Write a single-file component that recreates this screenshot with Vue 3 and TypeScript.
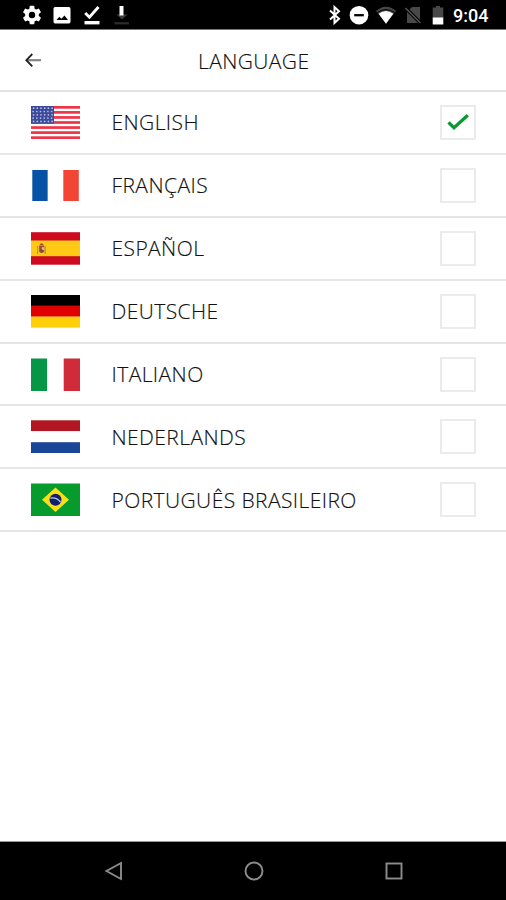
<script setup lang="ts">
import { ref } from 'vue'

interface Language {
  code: string
  label: string
}

const languages: Language[] = [
  { code: 'us', label: 'ENGLISH' },
  { code: 'fr', label: 'FRANÇAIS' },
  { code: 'es', label: 'ESPAÑOL' },
  { code: 'de', label: 'DEUTSCHE' },
  { code: 'it', label: 'ITALIANO' },
  { code: 'nl', label: 'NEDERLANDS' },
  { code: 'br', label: 'PORTUGUÊS BRASILEIRO' },
]

const selected = ref<string>('us')
</script>

<template>
  <div class="screen">
    <header class="status">
      <div class="notifications">
        <svg width="22" height="22" viewBox="0 0 24 24"><path fill="#fff" d="M19.43 12.98c.04-.32.07-.64.07-.98s-.03-.66-.07-.98l2.11-1.65c.19-.15.24-.42.12-.64l-2-3.46c-.12-.22-.39-.3-.61-.22l-2.49 1c-.52-.4-1.08-.73-1.69-.98l-.38-2.65A.49.49 0 0 0 14 2h-4c-.25 0-.46.18-.49.42l-.38 2.65c-.61.25-1.17.59-1.69.98l-2.49-1c-.23-.09-.49 0-.61.22l-2 3.46c-.13.22-.07.49.12.64l2.11 1.65c-.04.32-.07.65-.07.98s.03.66.07.98l-2.11 1.65c-.19.15-.24.42-.12.64l2 3.46c.12.22.39.3.61.22l2.49-1c.52.4 1.08.73 1.69.98l.38 2.65c.03.24.24.42.49.42h4c.25 0 .46-.18.49-.42l.38-2.65c.61-.25 1.17-.59 1.69-.98l2.49 1c.23.09.49 0 .61-.22l2-3.46c.12-.22.07-.49-.12-.64zM12 15.5a3.5 3.5 0 1 1 0-7 3.5 3.5 0 0 1 0 7z" /></svg>
        <svg width="22" height="22" viewBox="0 0 22 22"><rect x="2.5" y="3" width="17" height="16.500" rx="1.700" fill="#fff" /><path d="M5.500 16l2.800-3.200 2 1.900 3.200-3.200 3.500 4.500z" fill="#000" /></svg>
        <svg width="22" height="22" viewBox="0 0 22 22"><path d="M4.2 9l4.200 4.200L17.500 3" fill="none" stroke="#fff" stroke-width="2.900" /><path d="M3.500 18.700h15" stroke="#fff" stroke-width="3.400" /></svg>
        <svg width="22" height="22" viewBox="0 0 22 22"><path d="M5.500 10.500h11l-5.500 5z" fill="#3c3c3c" /><path d="M10.500 2v9.500" stroke="#fff" stroke-width="4" /><path d="M3.500 19.300h14.500" stroke="#2c2c2c" stroke-width="2.200" /></svg>
      </div>
      <div class="system">
        <svg width="14" height="22" viewBox="0 0 14 22"><path d="M2 6.500l9 8.300-4.500 4.200V3l4.500 4.200L2 15.500" fill="none" stroke="#fff" stroke-width="2" /></svg>
        <svg class="dnd" width="20" height="22" viewBox="0 0 20 22"><circle cx="10" cy="11.200" r="9.300" fill="#fff" /><path d="M5.200 11.200h9.600" stroke="#000" stroke-width="2.300" /></svg>
        <svg class="wifi" width="22" height="22" viewBox="0 0 22 22"><path d="M1 7Q11-1.500 21 7L11 19.500z" fill="#484848" /><path d="M2.300 8.500Q11 2.700 19.700 8.500" fill="none" stroke="#000" stroke-width="1" /><path d="M3.700 9.800Q11 4 18.300 9.800L11 19.800z" fill="#fff" /></svg>
        <svg class="sim" width="18" height="22" viewBox="0 0 18 22"><path d="M8 3h8v16H3V8z" fill="#484848" /><path d="M1 3.500l16 16" stroke="#000" stroke-width="3.500" /><path d="M1.500 4l15 15" stroke="#555" stroke-width="1.500" /></svg>
        <svg class="battery" width="12" height="22" viewBox="0 0 12 22"><path d="M4 2h4v1.500h3.300V14H.7V3.500H4z" fill="#484848" /><path d="M.7 13.500h10.600v7H.7z" fill="#fff" /></svg>
        <span class="clock">9:04</span>
      </div>
    </header>

    <div class="titlebar">
      <button class="back" aria-label="Back">
        <svg width="18" height="16" viewBox="0 0 18 16"><path d="M2 8.200h15" stroke="#858585" stroke-width="2.200" /><path d="M8.300 2L2.300 8.200l6 6.200" fill="none" stroke="#222" stroke-width="1.800" /></svg>
      </button>
      <h1>LANGUAGE</h1>
    </div>

    <main class="list">
      <div v-for="lang in languages" :key="lang.code" class="row" @click="selected = lang.code">
        <svg class="flag" viewBox="0 0 49 33" width="49" height="33">
          <g v-if="lang.code === 'us'">
            <rect width="49" height="33" fill="#fff" />
            <rect v-for="i in 7" :key="i" x="0" :y="(i - 1) * 5.05" width="49" height="2.7" fill="#ee3448" />
            <rect width="23" height="17.7" fill="#3c4a9c" />
            <template v-for="r in 5" :key="'r' + r">
              <circle v-for="c in 6" :key="c" :cx="c * 3.7 - 1.6 + (r % 2) * 0.5" :cy="r * 3.3 - 1.1" r="0.85" fill="#b9c0e0" />
            </template>
          </g>
          <g v-else-if="lang.code === 'fr'">
            <rect x="1.300" y="1" width="15.500" height="31" fill="#0553a4" />
            <rect x="16.800" y="1" width="15.500" height="31" fill="#fff" />
            <rect x="32.300" y="1" width="15.500" height="31" fill="#f24536" />
          </g>
          <g v-else-if="lang.code === 'es'">
            <rect y=".2" width="49" height="32.500" fill="#cd0a20" />
            <rect y="8.500" width="49" height="15.700" fill="#ffc916" />
            <path d="M8.200 13.500h5v6q-2.500 3-5 0z" fill="#a8442f" />
            <path d="M6.700 14v8M14.200 14v8" stroke="#a98361" stroke-width="1" />
            <path d="M8.500 13q2-3.500 4.300 0z" fill="#9b4430" />
            <path d="M10.700 15.200h2.500v3h-2.500z" fill="#d5b5a0" />
            <circle cx="10.800" cy="18.300" r="1" fill="#475078" />
          </g>
          <g v-else-if="lang.code === 'de'">
            <rect width="49" height="11" fill="#000" />
            <rect y="10.600" width="49" height="11.200" fill="#df0000" />
            <rect y="21.600" width="49" height="11" fill="#ffd00a" />
          </g>
          <g v-else-if="lang.code === 'it'">
            <rect y=".5" width="16.300" height="32.500" fill="#079546" />
            <rect x="16.300" y=".5" width="16.400" height="32.500" fill="#fff" />
            <rect x="32.700" y=".5" width="16.300" height="32.500" fill="#d02b3b" />
          </g>
          <g v-else-if="lang.code === 'nl'">
            <rect y=".3" width="49" height="11" fill="#b11722" />
            <rect y="11.300" width="49" height="11" fill="#fff" />
            <rect y="22.200" width="49" height="10.800" fill="#1b4697" />
          </g>
          <g v-else>
            <rect y=".5" width="49" height="32.500" fill="#069b2d" />
            <path d="M24.500 4.500L38 16.700 24.500 29 11 16.700z" fill="#f8df18" />
            <circle cx="24.500" cy="16.700" r="6" fill="#111f71" />
            <path d="M19.300 15.200q6-1.200 10.300 3.800" fill="none" stroke="#b7cbd4" stroke-width="1.200" />
          </g>
        </svg>
        <span class="label">{{ lang.label }}</span>
        <span class="box">
          <svg v-if="selected === lang.code" width="22" height="18" viewBox="0 0 22 18"><path d="M1.500 9.400l5.500 5.300L20.800 2.300" fill="none" stroke="#0c9835" stroke-width="3.300" /></svg>
        </span>
      </div>
    </main>

    <nav class="navbar">
      <svg width="20" height="20" viewBox="0 0 20 20"><path d="M17 2v16L2.500 10z" fill="none" stroke="#8c8c8c" stroke-width="1.900" /></svg>
      <svg width="20" height="20" viewBox="0 0 20 20"><circle cx="10" cy="10" r="8.500" fill="none" stroke="#8c8c8c" stroke-width="1.900" /></svg>
      <svg width="20" height="20" viewBox="0 0 20 20"><rect x="2.500" y="2.500" width="15" height="15" fill="none" stroke="#8c8c8c" stroke-width="1.900" /></svg>
    </nav>
  </div>
</template>

<style>
body {
  margin: 0;
  background: #fff;
}
</style>

<style scoped>
.screen {
  width: 506px;
  height: 900px;
  display: flex;
  flex-direction: column;
  overflow: hidden;
  background: #fff;
  color: #111;
  font-family: 'Open Sans', 'Noto Sans', sans-serif;
}
svg {
  display: block;
  flex: none;
}
.status {
  height: 25px;
  flex: none;
  display: flex;
  justify-content: space-between;
  padding: 4px 18px 0 21px;
  background: #000;
  border-bottom: 1px solid #777;
}
.notifications {
  display: flex;
  gap: 8px;
}
.system {
  display: flex;
}
.dnd {
  margin-left: 7px;
}
.wifi {
  margin-left: 6px;
}
.sim {
  margin-left: 7px;
}
.battery {
  margin-left: 10px;
}
.clock {
  margin-left: 9px;
  width: 35px;
  font: 500 18px/24px Roboto, sans-serif;
  color: #fff;
  white-space: nowrap;
}
.titlebar {
  height: 60px;
  flex: none;
  display: grid;
  grid-template-columns: 100px 1fr 100px;
  align-items: center;
  border-bottom: 2px solid #e2e2e2;
}
.back {
  padding: 0;
  margin-left: 24px;
  border: 0;
  background: none;
  justify-self: start;
}
h1 {
  margin: 0;
  padding: 2px 0 0 1.5px;
  font-size: 21px;
  line-height: 30px;
  font-weight: 300;
  letter-spacing: 0.4px;
  -webkit-text-stroke: 0.15px #111;
  text-align: center;
}
.list {
  flex: 1;
}
.row {
  height: 62.9px;
  box-sizing: border-box;
  display: flex;
  align-items: center;
  padding: 0 30px 0 31.4px;
  border-bottom: 2px solid #e6e6e6;
}
.flag {
  margin-right: 31.1px;
}
.label {
  flex: 1;
  font-size: 21px;
  line-height: 30px;
  font-weight: 300;
  letter-spacing: 0.42px;
  -webkit-text-stroke: 0.15px #111;
  white-space: nowrap;
}
.box {
  width: 36px;
  height: 35px;
  box-sizing: border-box;
  border: 2px solid #ebebeb;
  display: flex;
  align-items: center;
  justify-content: center;
}
.navbar {
  height: 59px;
  flex: none;
  display: flex;
  justify-content: space-between;
  align-items: center;
  box-sizing: border-box;
  padding: 0 102.500px 0 103.500px;
  background: #000;
  border-top: 1px solid #999;
}
</style>
